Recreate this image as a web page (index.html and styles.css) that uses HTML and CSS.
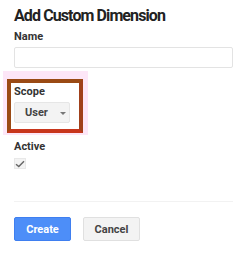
FILE: index.html
```html
<!DOCTYPE html>
<html lang="en">
<head>
    <meta charset="UTF-8">
    <title>Add Custom Dimension</title>
    <link rel="stylesheet" href="styles.css">
</head>
<body>

<div class="panel">
    <h1>Add Custom Dimension</h1>

    <label class="field-label">Name</label>
    <input type="text" class="text-input">

    <div class="highlight">
        <div class="scope-box">
            <label class="field-label">Scope</label>
            <button class="dropdown">User <span class="caret"></span></button>
        </div>
    </div>

    <label class="field-label active-label">Active</label>
    <div class="checkbox">
        <svg width="10" height="8" viewBox="0 0 10 8">
            <path d="M1 4.2 L3.8 6.6 L9 1.2" fill="none" stroke="#666" stroke-width="1.4"/>
        </svg>
    </div>

    <div class="actions">
        <button class="btn btn-primary">Create</button>
        <button class="btn btn-default">Cancel</button>
    </div>
</div>

</body>
</html>
```

FILE: styles.css
```css
* {
    margin: 0;
    padding: 0;
    box-sizing: border-box;
}

body {
    font-family: Roboto, 'Liberation Sans', sans-serif;
    background: white;
    color: #222;
}

.panel {
    padding: 6px 17px 0 14px;
}

h1 {
    font-size: 16px;
    letter-spacing: -0.9px;
    font-weight: 700;
    color: #222;
    line-height: 20px;
}

.field-label {
    display: block;
    font-size: 11px;
    font-weight: 700;
    color: #333;
    line-height: 14px;
    margin-top: 4px;
}

.text-input {
    display: block;
    width: 219px;
    height: 21px;
    margin-top: 3px;
    border: 1px solid #e3e3e3;
    border-radius: 2px;
}

.highlight {
    margin: 3px 0 0 -11px;
    width: 85px;
    padding: 8px 5px 2px 4px;
    background: #fde6f7;
}

.scope-box {
    border: 4px solid #9a4a14;
    border-bottom-color: #c8361c;
    border-right-color: #a0401a;
    padding: 2px 0 0 3px;
    height: 54px;
    background: white;
}

.scope-box .field-label {
    margin-top: 0;
}

.dropdown {
    display: block;
    margin-top: 3px;
    width: 56px;
    height: 21px;
    background: #f3f3f3;
    border: 1px solid #e6e6e6;
    border-radius: 2px;
    font-family: Roboto, 'Liberation Sans', sans-serif;
    font-size: 11px;
    font-weight: 700;
    color: #444;
    text-align: left;
    padding-left: 10px;
}

.caret {
    display: inline-block;
    width: 0;
    height: 0;
    margin-left: 9px;
    vertical-align: middle;
    border-left: 3px solid transparent;
    border-right: 3px solid transparent;
    border-top: 3px solid #777;
}

.active-label {
    margin-top: 5px;
}

.checkbox {
    width: 12px;
    height: 11px;
    margin-top: 4px;
    background: #f3f3f3;
    border: 1px solid #e8e8e8;
    display: flex;
    align-items: center;
    justify-content: center;
}

.actions {
    margin-top: 32px;
    border-top: 1px solid #f2f2f2;
    padding-top: 15px;
    display: flex;
    gap: 12px;
}

.btn {
    width: 57px;
    height: 24px;
    border-radius: 2px;
    font-family: Roboto, 'Liberation Sans', sans-serif;
    font-size: 11px;
    font-weight: 700;
}

.btn-primary {
    background: #4d8ef8;
    border: 1px solid #3f7ff0;
    color: white;
}

.btn-default {
    background: #f3f3f3;
    border: 1px solid #e0e0e0;
    color: #444;
}
```
